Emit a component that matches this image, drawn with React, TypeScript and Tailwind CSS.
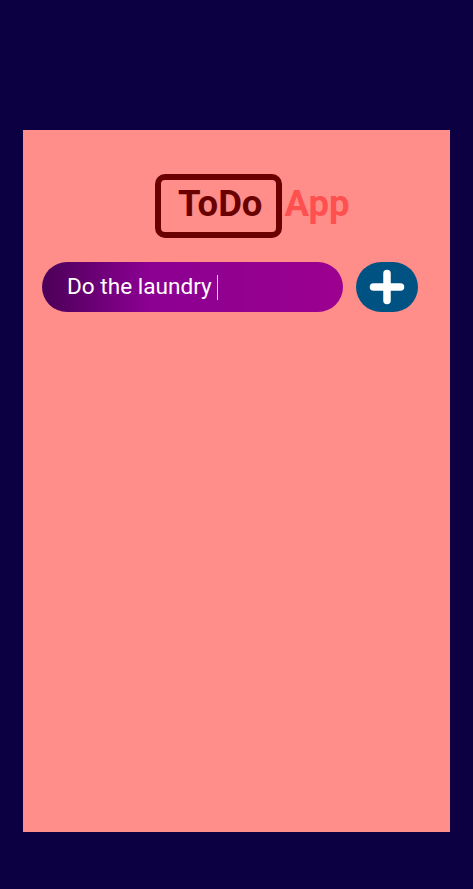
import React from "react";

export default function App() {
  return (
    <div className="min-h-screen w-full bg-[#0d0042] pt-[130px] px-[23px] pb-[57px]" style={{ fontFamily: "Roboto, 'Noto Sans', sans-serif" }}>
      <div className="h-[702px] w-full bg-[#ff8e8a] pt-[44px] pl-[19px] pr-[32px]">
        <div className="flex items-center pl-[113px]">
          <div className="h-[64px] rounded-[10px] border-[6px] border-[#6b0000] pl-[17px] pr-[14px] pb-[3px] flex items-center">
            <span className="text-[36.5px] font-bold leading-none text-[#6b0000]">ToDo</span>
          </div>
          <span className="ml-[2px] mb-[3px] text-[36.5px] font-bold leading-none text-[#ff5050]">App</span>
        </div>
        <div className="mt-[24px] flex items-center gap-[13px]">
          <div className="flex h-[50px] flex-1 items-center rounded-full bg-[linear-gradient(to_right,#4b0058,#8b0092_35%,#9c008f)] pl-[25px]">
            <span className="text-[22.6px] leading-none text-white">Do the laundry</span>
            <span className="ml-[5px] h-[25px] w-[1px] bg-white/80"></span>
          </div>
          <button className="flex h-[50px] w-[62px] items-center justify-center rounded-full bg-[#005282]">
            <svg width="36" height="36" viewBox="0 0 36 36">
              <path d="M18 4.5 V31.5 M4.5 18 H31.5" stroke="white" strokeWidth="7.5" strokeLinecap="round" fill="none" />
            </svg>
          </button>
        </div>
      </div>
    </div>
  );
}
